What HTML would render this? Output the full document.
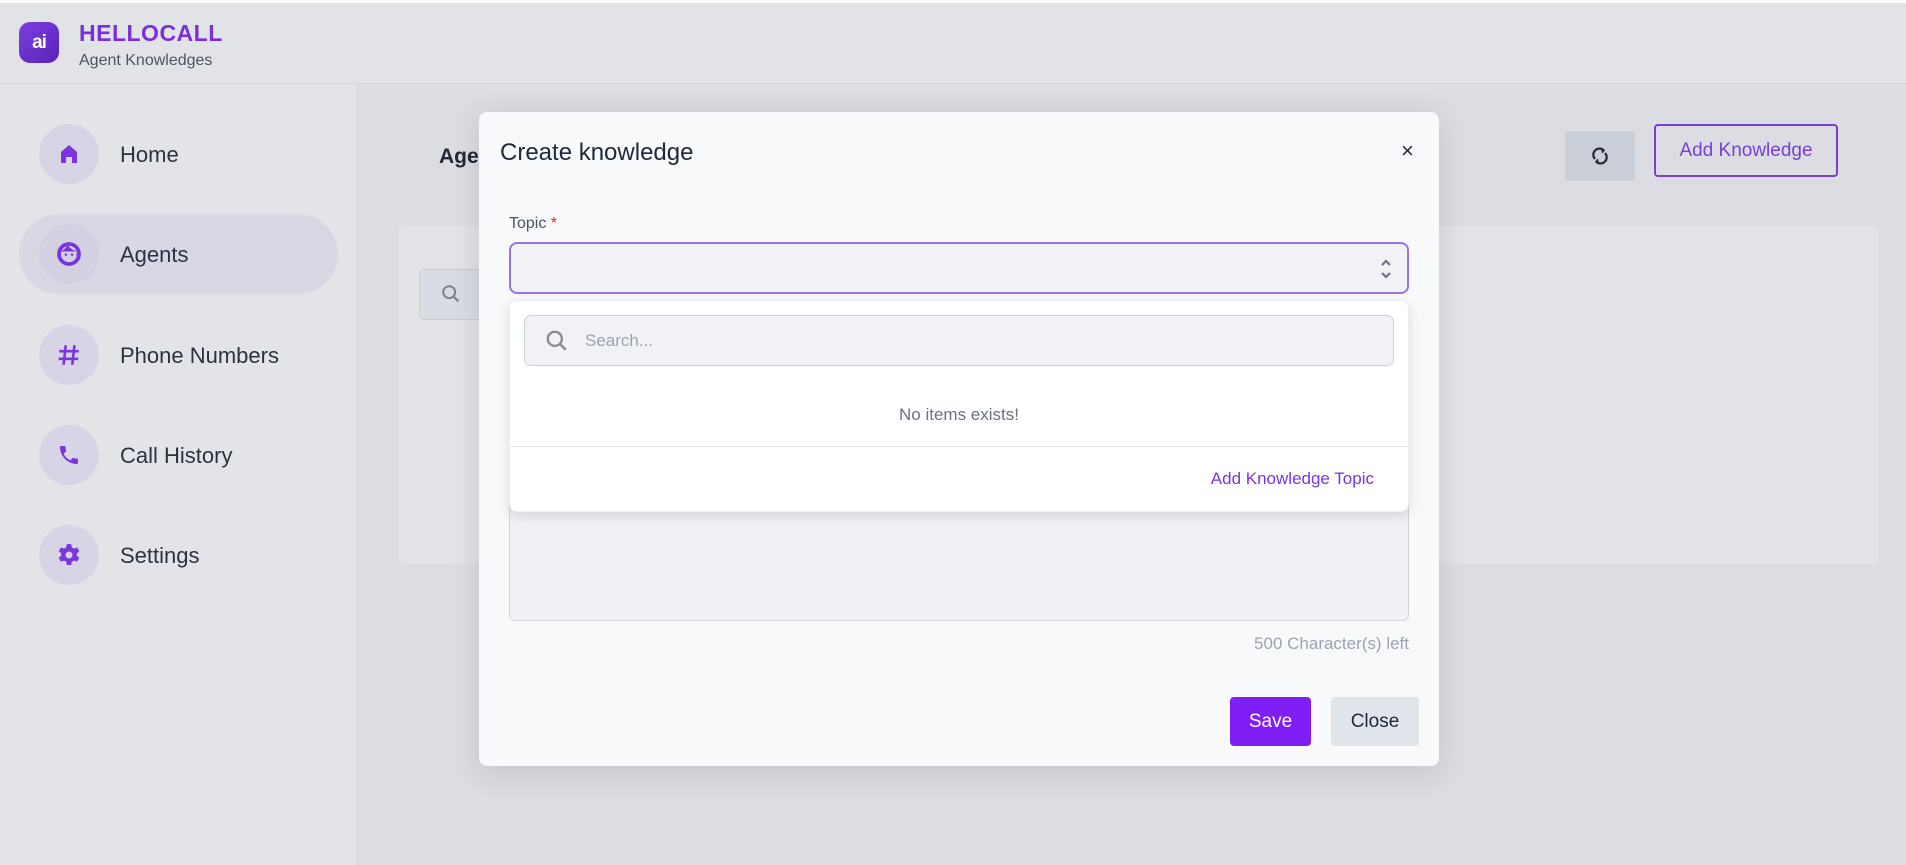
<!DOCTYPE html>
<html><head><meta charset="utf-8"><style>
*{box-sizing:border-box;margin:0;padding:0}
body{width:1906px;height:865px;overflow:hidden;font-family:"Liberation Sans",sans-serif;background:#dfe0e4;position:relative;color:#1f2937}
.abs{position:absolute}
.topstrip{left:0;top:0;width:1906px;height:3px;background:#fff}
.header{left:0;top:3px;width:1906px;height:81px;background:#e2e3e7;border-bottom:1px solid #d6d7dc}
.sidebar{left:0;top:84px;width:357px;height:781px;background:#e3e4e8;border-right:1px solid #d8d9de}
.circ{width:60px;height:60px;border-radius:50%;background:#d7d4e6;display:flex;align-items:center;justify-content:center}
.navt{font-size:22px;color:#2b3342}
.main{left:357px;top:84px;width:1549px;height:781px;background:#dcdde2}
.modal{left:479px;top:112px;width:960px;height:654px;background:#f8f9fb;border-radius:8px;box-shadow:0 6px 30px rgba(0,0,0,.12)}
</style></head><body>
<div class="abs topstrip"></div>
<div class="abs header"></div>
<div class="abs" style="left:19px;top:22px;width:40px;height:41px;border-radius:11px;background:linear-gradient(135deg,#7b3fe0,#5a22b8);display:flex;align-items:center;justify-content:center;color:#fff;font-weight:bold;font-size:19px;letter-spacing:-1px">ai</div>
<div class="abs" style="left:79px;top:19px;font-size:23px;font-weight:900;color:#7a2ee0;font-family:'Liberation Sans Narrow','Liberation Sans',sans-serif;letter-spacing:0.5px;line-height:28px">HELLOCALL</div>
<div class="abs" style="left:79px;top:52px;font-size:16px;color:#4b5563">Agent Knowledges</div>

<div class="abs sidebar"></div>
<div class="abs" style="left:19px;top:214px;width:319px;height:80px;border-radius:40px;background:#d9d7e4"></div>

<div class="abs circ" style="left:39px;top:124px"><svg width="24" height="24" viewBox="0 0 24 24"><path d="M4 10L12 3l8 7v11h-5v-6h-6v6H4z" fill="#7a35e0"/></svg></div>
<div class="abs navt" style="left:120px;top:142px">Home</div>
<div class="abs circ" style="left:39px;top:224px;background:#d3d0e2"><svg width="30" height="30" viewBox="0 0 24 24"><circle cx="12" cy="12" r="8" fill="none" stroke="#7a35e0" stroke-width="3"/><path d="M5 10q3-1 6-5 3 4 8 5" fill="#7a35e0"/><circle cx="9.5" cy="12.5" r="1" fill="#7a35e0"/><circle cx="14.5" cy="12.5" r="1" fill="#7a35e0"/><rect x="18" y="11" width="3" height="5" rx="1" fill="#7a35e0"/></svg></div>
<div class="abs navt" style="left:120px;top:242px">Agents</div>
<div class="abs circ" style="left:39px;top:325px"><svg width="26" height="26" viewBox="0 0 24 24"><path d="M9 3L7 21M17 3l-2 18M3 8.5h18M2.5 15.5h18" stroke="#7a35e0" stroke-width="2.4" fill="none"/></svg></div>
<div class="abs navt" style="left:120px;top:343px">Phone Numbers</div>
<div class="abs circ" style="left:39px;top:425px"><svg width="24" height="24" viewBox="0 0 24 24"><path d="M6.6 10.8a15 15 0 006.6 6.6l2.2-2.2a1 1 0 011-.25 11 11 0 003.6.6 1 1 0 011 1V20a1 1 0 01-1 1A17 17 0 013 4a1 1 0 011-1h3.5a1 1 0 011 1c0 1.25.2 2.450.6 3.6a1 1 0 01-.25 1z" fill="#7a35e0"/></svg></div>
<div class="abs navt" style="left:120px;top:443px">Call History</div>
<div class="abs circ" style="left:39px;top:525px"><svg width="26" height="26" viewBox="0 0 24 24"><path d="M10 2h4l.6 3 2 1.1 2.9-1 2 3.4-2.3 2v2.2l2.3 2-2 3.4-2.9-1-2 1.1-.6 3h-4l-.6-3-2-1.1-2.9 1-2-3.4 2.3-2v-2.2l-2.3-2 2-3.4 2.9 1 2-1.1z" fill="#7a35e0"/><circle cx="12" cy="12" r="3.2" fill="#d7d4e6"/></svg></div>
<div class="abs navt" style="left:120px;top:543px">Settings</div>

<div class="abs main"></div>
<div class="abs" style="left:439px;top:145px;font-size:21px;font-weight:bold;color:#1f2937">Agent Knowledges</div>
<div class="abs" style="left:399px;top:226px;width:1480px;height:338px;background:#e2e3e7;border-radius:6px"></div>
<div class="abs" style="left:419px;top:269px;width:300px;height:51px;background:#d9dde3;border:1px solid #c8ccd3;border-radius:6px"></div>
<svg class="abs" style="left:440px;top:283px" width="22" height="22" viewBox="0 0 24 24"><circle cx="10" cy="10" r="6.5" fill="none" stroke="#7c8490" stroke-width="2.2"/><path d="M15 15l5 5" stroke="#7c8490" stroke-width="2.4"/></svg>
<div class="abs" style="left:1565px;top:131px;width:70px;height:50px;background:#c9ced7;border-radius:4px"></div>
<svg class="abs" style="left:1588px;top:144px" width="24" height="24" viewBox="0 0 24 24"><path d="M7 15a6 6 0 019-8.5M17 9a6 6 0 01-9 8.5" fill="none" stroke="#1f2937" stroke-width="2.2"/><path d="M13 4l4 2.5-3 3z M11 20l-4-2.5 3-3z" fill="#1f2937"/></svg>
<div class="abs" style="left:1654px;top:124px;width:184px;height:53px;border:2px solid #7a3fd6;border-radius:4px;color:#7a3fd6;font-size:19px;display:flex;align-items:center;justify-content:center">Add Knowledge</div>

<div class="abs modal"></div>
<div class="abs" style="left:500px;top:139px;font-size:24px;color:#1f2937">Create knowledge</div>
<div class="abs" style="left:1401px;top:138px;font-size:22px;color:#1f2937">×</div>
<div class="abs" style="left:509px;top:215px;font-size:16px;color:#4b5563">Topic <span style="color:#dc2626">*</span></div>
<div class="abs" style="left:509px;top:242px;width:900px;height:52px;border:2px solid #9a73e6;border-radius:8px;background:#f0f2f6"></div>
<svg class="abs" style="left:1378px;top:255px" width="16" height="28" viewBox="0 0 16 28"><path d="M4 10l4-4 4 4M4 18l4 4 4-4" fill="none" stroke="#6b7280" stroke-width="2.2"/></svg>
<div class="abs" style="left:509px;top:400px;width:900px;height:221px;border:1px solid #d0d4da;border-radius:6px;background:#eff1f5"></div>
<div class="abs" style="left:509px;top:300px;width:900px;height:212px;background:#fff;border-radius:8px;box-shadow:0 4px 12px rgba(0,0,0,.12);border:1px solid #eceef1"></div>
<div class="abs" style="left:524px;top:315px;width:870px;height:51px;background:#f0f2f6;border:1px solid #cdd2d9;border-radius:7px"></div>
<svg class="abs" style="left:544px;top:328px" width="26" height="26" viewBox="0 0 24 24"><circle cx="10" cy="10" r="6.5" fill="none" stroke="#878c95" stroke-width="2.2"/><path d="M15 15l5 5" stroke="#878c95" stroke-width="2.4"/></svg>
<div class="abs" style="left:585px;top:331px;font-size:17px;color:#9ca3af">Search...</div>
<div class="abs" style="left:509px;top:405px;width:900px;text-align:center;font-size:17px;color:#6b7280">No items exists!</div>
<div class="abs" style="left:510px;top:446px;width:898px;height:1px;background:#e5e7eb"></div>
<div class="abs" style="left:1000px;top:469px;width:374px;text-align:right;font-size:17px;color:#7a35e0">Add Knowledge Topic</div>
<div class="abs" style="left:1000px;top:634px;width:409px;text-align:right;font-size:17px;color:#9ca3af">500 Character(s) left</div>
<div class="abs" style="left:1230px;top:697px;width:81px;height:49px;background:#7f1ff5;border-radius:4px;color:#fff;font-size:19px;display:flex;align-items:center;justify-content:center">Save</div>
<div class="abs" style="left:1331px;top:697px;width:88px;height:49px;background:#e0e5ec;border-radius:4px;color:#1f2937;font-size:19px;display:flex;align-items:center;justify-content:center">Close</div>
</body></html>
